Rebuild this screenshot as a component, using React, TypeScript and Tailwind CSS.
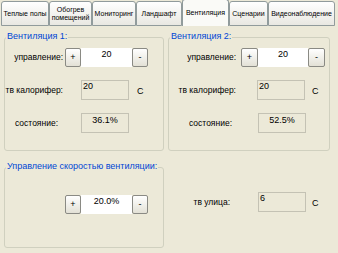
import React from "react";

const tabs = [
  { label: "Теплые полы", w: "w-[48px]" },
  { label: "Обогрев\nпомещений", w: "w-[43px]" },
  { label: "Мониторинг", w: "w-[44px]" },
  { label: "Ландшафт", w: "w-[46px]" },
  { label: "Вентиляция", w: "w-[47px]", active: true },
  { label: "Сценарии", w: "w-[39px]" },
  { label: "Видеонаблюдение", w: "w-[67px]" },
];

function Tab({ label, w, active }: { label: string; w: string; active?: boolean }) {
  if (active) {
    return (
      <div
        className={`${w} h-[27px] flex items-center justify-center border border-b-0 border-[#919b9c] rounded-t-[3px] bg-[#fafaf7] text-[7px] leading-[8px] text-black`}
      >
        {label}
      </div>
    );
  }
  return (
    <div
      className={`${w} h-[25px] flex items-center justify-center text-center whitespace-pre border border-[#919b9c] rounded-t-[3px] bg-gradient-to-b from-white to-[#e9e8e2] text-[7px] leading-[8px] text-black`}
    >
      {label}
    </div>
  );
}

function Group({
  title,
  className,
  children,
}: {
  title: string;
  className: string;
  children: React.ReactNode;
}) {
  return (
    <div className={`relative border border-[#d0d0bf] rounded-[3px] ${className}`}>
      <span className="absolute left-[1px] -top-[7px] px-[1px] bg-[#ece9d8] text-[9px] leading-[11px] text-[#0046d5] whitespace-nowrap">
        {title}
      </span>
      {children}
    </div>
  );
}

function Btn({ children, w }: { children: React.ReactNode; w: string }) {
  return (
    <div
      className={`${w} h-[19px] flex items-center justify-center border border-[#8a8a84] rounded-[2px] bg-gradient-to-b from-white to-[#e3e1d6] text-[9px] leading-none text-black`}
    >
      {children}
    </div>
  );
}

function Stepper({ value, inputW, btnW }: { value: string; inputW: string; btnW: string }) {
  return (
    <div className="flex">
      <Btn w={btnW}>+</Btn>
      <div className={`${inputW} h-[19px] bg-white text-center text-[9px] leading-[11px] pt-[1px]`}>
        {value}
      </div>
      <Btn w={btnW}>-</Btn>
    </div>
  );
}

function Field({ value, center }: { value: string; center?: boolean }) {
  return (
    <div
      className={`w-[48px] h-[20px] border border-[#c4c2b4] bg-[#ece9d8] text-[9px] leading-[11px] ${
        center ? "text-center pt-[1px]" : "pl-[1px]"
      }`}
    >
      {value}
    </div>
  );
}

function Label({ text, w, pr = "" }: { text: string; w: string; pr?: string }) {
  return (
    <div className={`${w} flex justify-end shrink-0 ${pr}`}>
      <span className="whitespace-nowrap text-[8.5px] leading-[11px] text-black">{text}</span>
    </div>
  );
}

function VentGroup({
  title,
  value,
  temp,
  state,
  labelW,
  gap,
  fieldGap,
  cGap,
  stateGap,
  statePr,
  btnW,
  inputW,
}: {
  title: string;
  value: string;
  temp: string;
  state: string;
  labelW: string;
  gap: string;
  fieldGap: string;
  cGap: string;
  stateGap: string;
  statePr: string;
  btnW: string;
  inputW: string;
}) {
  return (
    <Group title={title} className="h-[114px] pt-[10px]">
      <div className="flex flex-col gap-[13px]">
        <div className={`flex items-center h-[19px] ${gap}`}>
          <Label text="управление:" w={labelW} />
          <Stepper value={value} inputW={inputW} btnW={btnW} />
        </div>
        <div className={`flex items-center h-[20px] ${fieldGap}`}>
          <Label text="тв калорифер:" w={labelW} />
          <div className={`flex items-center ${cGap}`}>
            <Field value={temp} />
            <span className="text-[9px] leading-[11px] pt-[2px]">C</span>
          </div>
        </div>
        <div className={`flex items-center h-[20px] ${stateGap}`}>
          <Label text="состояние:" w={labelW} pr={statePr} />
          <Field value={state} center />
        </div>
      </div>
    </Group>
  );
}

export default function App() {
  return (
    <div
      className="w-[338px] h-[253px] bg-[#ece9d8] overflow-hidden text-black"
      style={{ fontFamily: '"Liberation Sans", Arial, sans-serif' }}
    >
      <div className="flex items-end h-[27px] pl-[1px] border-b border-[#ece9d8]">
        {tabs.map((t) => (
          <Tab key={t.label} label={t.label} w={t.w} active={t.active} />
        ))}
      </div>
      <div className="grid grid-cols-[160px_162px] gap-x-[4px] gap-y-[16px] pl-[4px] pt-[10px]">
        <VentGroup
          title="Вентиляция 1:"
          value="20"
          temp="20"
          state="36.1%"
          labelW="w-[58px]"
          gap="gap-[2px]"
          fieldGap="gap-[18px]"
          cGap="gap-[8px]"
          stateGap="gap-[18px]"
          statePr="pr-[5px]"
          btnW="w-[16px]"
          inputW="w-[51px]"
        />
        <VentGroup
          title="Вентиляция 2:"
          value="20"
          temp="20"
          state="52.5%"
          labelW="w-[67px]"
          gap="gap-[5px]"
          fieldGap="gap-[21px]"
          cGap="gap-[7px]"
          stateGap="gap-[22px]"
          statePr="pr-[4px]"
          btnW="w-[17px]"
          inputW="w-[50px]"
        />
        <Group title="Управление скоростью вентиляции:" className="h-[81px] pt-[27px] pl-[60px]">
          <Stepper value="20.0%" inputW="w-[51px]" btnW="w-[16px]" />
        </Group>
        <div className="pt-[25px]">
          <div className="flex items-center h-[20px] gap-[28px]">
            <Label text="тв улица:" w="w-[62px]" />
            <div className="flex items-center gap-[6px]">
              <Field value="6" />
              <span className="text-[9px] leading-[11px] pt-[2px]">C</span>
            </div>
          </div>
        </div>
      </div>
    </div>
  );
}
